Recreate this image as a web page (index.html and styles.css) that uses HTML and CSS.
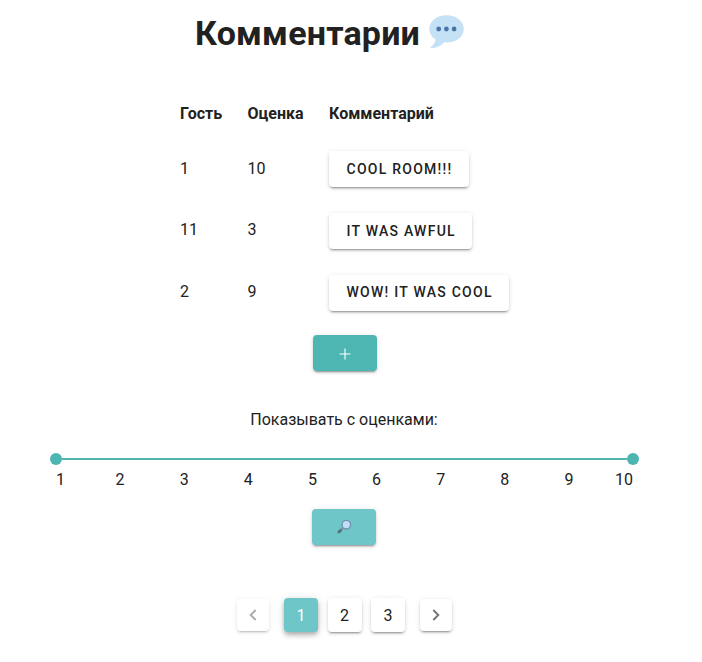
FILE: index.html
```html
<!DOCTYPE html>
<html lang="ru">
<head>
<meta charset="utf-8">
<title>Комментарии</title>
<link rel="stylesheet" href="styles.css">
</head>
<body>
<main class="page">
  <h1 class="title">Комментарии
    <svg class="bubble" viewBox="0 0 35 34" aria-hidden="true">
      <path fill="#c5e1f6" d="M17.5 .3C27.2 .3 34.8 6.2 34.8 13.9S27.2 27.4 17.5 27.4c-.8 0-1.6 0-2.4-.1C12 30.8 7.4 33.200 2.100 33.200c-.6 0-.5-.7-.1-1.100 2.200-1.800 4.300-4.300 4.600-7.600C2.700 22 .3 18.200.3 13.900.3 6.200 7.900.3 17.500.3z"/>
      <g fill="#4677a8"><circle cx="9.700" cy="14" r="2.400"/><circle cx="17.400" cy="14" r="2.400"/><circle cx="25.100" cy="14" r="2.400"/></g>
    </svg>
  </h1>
  <div class="table">
    <b>Гость</b><b>Оценка</b><b>Комментарий</b>
    <span>1</span><span>10</span><button class="btn">COOL ROOM!!!</button>
    <span class="raised">11</span><span class="raised">3</span><button class="btn">IT WAS AWFUL</button>
    <span class="raised">2</span><span class="raised">9</span><button class="btn last">WOW! IT WAS COOL</button>
  </div>
  <button class="btn add" aria-label="+"><svg width="12" height="12" viewBox="0 0 12 12"><path d="M6 .5v11M.5 6h11" stroke="#fff" stroke-width="1.100"/></svg></button>
  <p class="caption">Показывать с оценками:</p>
  <div class="slider"><i class="thumb"></i><i class="track"></i><i class="thumb"></i></div>
  <div class="ticks"><span>1</span><span>2</span><span>3</span><span>4</span><span>5</span><span>6</span><span>7</span><span>8</span><span>9</span><span>10</span></div>
  <button class="btn search"><svg width="15" height="15" viewBox="0 0 15 15"><path d="M1.900 13.100L4 11" stroke="#546e7a" stroke-width="2.800" stroke-linecap="round"/><path d="M4 11l2.500-2.500" stroke="#78909c" stroke-width="1.600"/><circle cx="9.300" cy="5.700" r="4.300" fill="#bbdefb" stroke="#7890a8" stroke-width="1.400"/></svg></button>
  <nav class="pages">
    <button class="arrow off"><svg width="8" height="12" viewBox="0 0 8 12"><path d="M6.700 1L1.700 6l5 5"/></svg></button>
    <button class="num active">1</button><button class="num">2</button><button class="num">3</button>
    <button class="arrow"><svg width="8" height="12" viewBox="0 0 8 12"><path d="M1.300 1l5 5-5 5"/></svg></button>
  </nav>
</main>
</body>
</html>
```
FILE: styles.css
```css
* { box-sizing: border-box; }
body { margin: 0; background: #fff; color: #212121; font: 16px/24px Roboto, sans-serif; }
.page { width: 689px; height: 662px; display: flex; flex-direction: column; align-items: center; }
.title { display: flex; align-items: flex-start; gap: 9px; align-self: flex-start; height: 48px; margin: 9px 0 0 195px; font-size: 34px; line-height: 48px; letter-spacing: .2px; font-weight: 700; }
.bubble { width: 35px; height: 34px; margin-top: 6px; }
.table { display: grid; grid-template-columns: 67.5px 81.5px auto; grid-template-rows: 24px 36px 36px 36px; row-gap: 26px; align-items: center; justify-items: start; align-self: flex-start; margin: 44px 0 0 180px; }
.table b { padding-top: 2px; }
.raised { padding-bottom: 2px; }
.btn { display: flex; align-items: center; justify-content: center; height: 36px; padding: 0 16.4px 0 17.5px; border: 0; border-radius: 4px; background: #fff; color: #212121; font: 500 14px/20px Roboto, sans-serif; letter-spacing: 1.25px; box-shadow: 0 3px 1px -2px rgba(0,0,0,.2), 0 2px 2px rgba(0,0,0,.14), 0 1px 5px rgba(0,0,0,.12); }
.last { padding-bottom: 2px; }
.add, .search { width: 64px; padding: 0; }
.add { margin: 24px 0 0 1px; padding: 2px 1px 0 0; background: #4db6b3; }
.caption { margin: 37px 1px 0 0; }
.slider { display: flex; align-items: center; width: 589px; height: 12px; margin: 21px 1px 0 0; }
.thumb { width: 12px; height: 12px; border-radius: 50%; background: #4db6b3; }
.track { flex: 1; height: 2px; background: #4db6b3; }
.ticks { display: grid; grid-template-columns: 1fr repeat(8, 2fr) 1fr; width: 577px; height: 24px; margin-top: 3px; text-align: center; }
.ticks span:first-child { justify-self: start; }
.ticks span:last-child { justify-self: end; }
.search { margin: 17px 1px 0 0; background: #6fc6c8; }
.search svg { margin-top: -1px; }
.pages { display: flex; align-items: center; margin: 53px 0 0; }
.num, .arrow { display: flex; align-items: center; justify-content: center; padding: 0; border: 0; border-radius: 4px; background: #fff; box-shadow: 0 3px 1px -2px rgba(0,0,0,.2), 0 2px 2px rgba(0,0,0,.14), 0 1px 5px rgba(0,0,0,.12); }
.num { width: 34px; height: 34px; margin: 0 4.8px; padding-top: 2px; color: #212121; font: 16px/24px Roboto, sans-serif; }
.active { background: #6fc6c8; color: #fff; box-shadow: 0 2px 4px -1px rgba(0,0,0,.2), 0 4px 5px rgba(0,0,0,.14), 0 1px 10px rgba(0,0,0,.12); }
.arrow { width: 32px; height: 32px; margin: 0 10px; }
.arrow path { fill: none; stroke: #757575; stroke-width: 1.9; }
.off { opacity: .6; }
```
